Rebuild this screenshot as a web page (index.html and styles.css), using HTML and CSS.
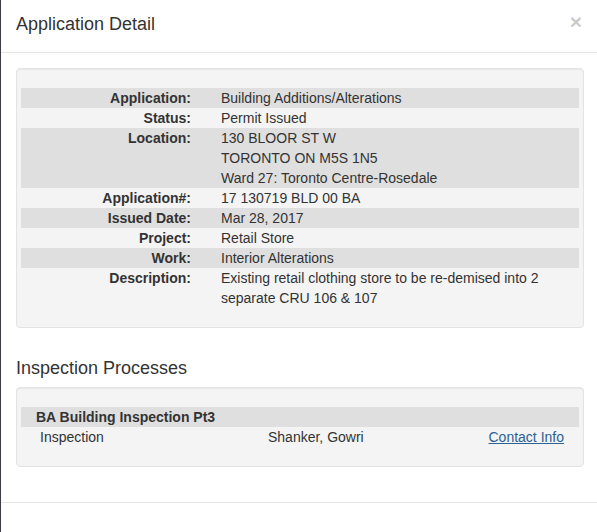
FILE: index.html
```html
<!DOCTYPE html>
<html>
<head>
<meta charset="utf-8">
<link rel="stylesheet" href="styles.css">
</head>
<body>
<div class="modal">
  <div class="modal-header">
    <h4 class="modal-title">Application Detail</h4>
    <span class="close">&times;</span>
  </div>
  <div class="modal-body">
    <div class="well">
      <div class="detail">
        <div class="row odd"><div class="lbl">Application:</div><div class="val">Building Additions/Alterations</div></div>
        <div class="row"><div class="lbl">Status:</div><div class="val">Permit Issued</div></div>
        <div class="row odd"><div class="lbl">Location:</div><div class="val">130 BLOOR ST W<br>TORONTO ON M5S 1N5<br>Ward 27: Toronto Centre-Rosedale</div></div>
        <div class="row"><div class="lbl">Application#:</div><div class="val">17 130719 BLD 00 BA</div></div>
        <div class="row odd"><div class="lbl">Issued Date:</div><div class="val">Mar 28, 2017</div></div>
        <div class="row"><div class="lbl">Project:</div><div class="val">Retail Store</div></div>
        <div class="row odd"><div class="lbl">Work:</div><div class="val">Interior Alterations</div></div>
        <div class="row"><div class="lbl">Description:</div><div class="val">Existing retail clothing store to be re-demised into 2<br>separate CRU 106 &amp; 107</div></div>
      </div>
    </div>
    <h4 class="section-title">Inspection Processes</h4>
    <div class="well">
      <div class="detail">
        <div class="proc-head">BA Building Inspection Pt3</div>
        <div class="proc-row">
          <span>Inspection</span>
          <span>Shanker, Gowri</span>
          <a href="#" class="link">Contact Info</a>
        </div>
      </div>
    </div>
  </div>
  <div class="modal-footer"></div>
</div>
</body>
</html>
```

FILE: styles.css
```css
html, body {
  margin: 0;
  padding: 0;
  background: #fff;
  overflow: hidden;
}
body {
  font-family: "Liberation Sans", Arial, sans-serif;
  font-size: 14px;
  line-height: 20px;
  color: #333;
  width: 597px;
  height: 532px;
}
.modal {
  border-left: 1px solid #3b3f44;
  height: 532px;
  box-sizing: border-box;
  background: #fff;
}
.modal-header {
  display: flex;
  justify-content: space-between;
  align-items: flex-start;
  padding: 11px 15px 0 15px;
  height: 41px;
  border-bottom: 1px solid #e5e5e5;
}
.modal-title {
  margin: 0;
  font-size: 18px;
  font-weight: normal;
  line-height: 26px;
  color: #333;
}
.close {
  font-size: 21px;
  font-weight: bold;
  line-height: 1;
  color: #000;
  opacity: 0.2;
}
.modal-body {
  display: flex;
  flex-direction: column;
  padding: 15px 13px 15px 15px;
}
.well {
  background: #f4f4f4;
  border: 1px solid #e3e3e3;
  border-radius: 4px;
  box-shadow: inset 0 1px 1px rgba(0,0,0,0.05);
  padding: 19px;
  margin-bottom: 20px;
}
.detail {
  margin: 0 -15px;
}
.row {
  display: grid;
  grid-template-columns: 186px 1fr;
}
.row.odd {
  background: #dfdfdf;
}
.lbl {
  font-weight: bold;
  text-align: right;
  padding-right: 16px;
}
.val {
  padding-left: 14px;
}
.section-title {
  margin: 10px 0 9px 0;
  font-size: 18px;
  font-weight: normal;
  line-height: 20px;
  color: #333;
}
.proc-head {
  background: #dfdfdf;
  font-weight: bold;
  padding-left: 15px;
}
.proc-row {
  display: grid;
  grid-template-columns: 228px 1fr auto;
  padding: 0 15px 0 19px;
}
.link {
  color: #2d6192;
  text-decoration: underline;
}
.modal-footer {
  border-top: 1px solid #e5e5e5;
}
```
